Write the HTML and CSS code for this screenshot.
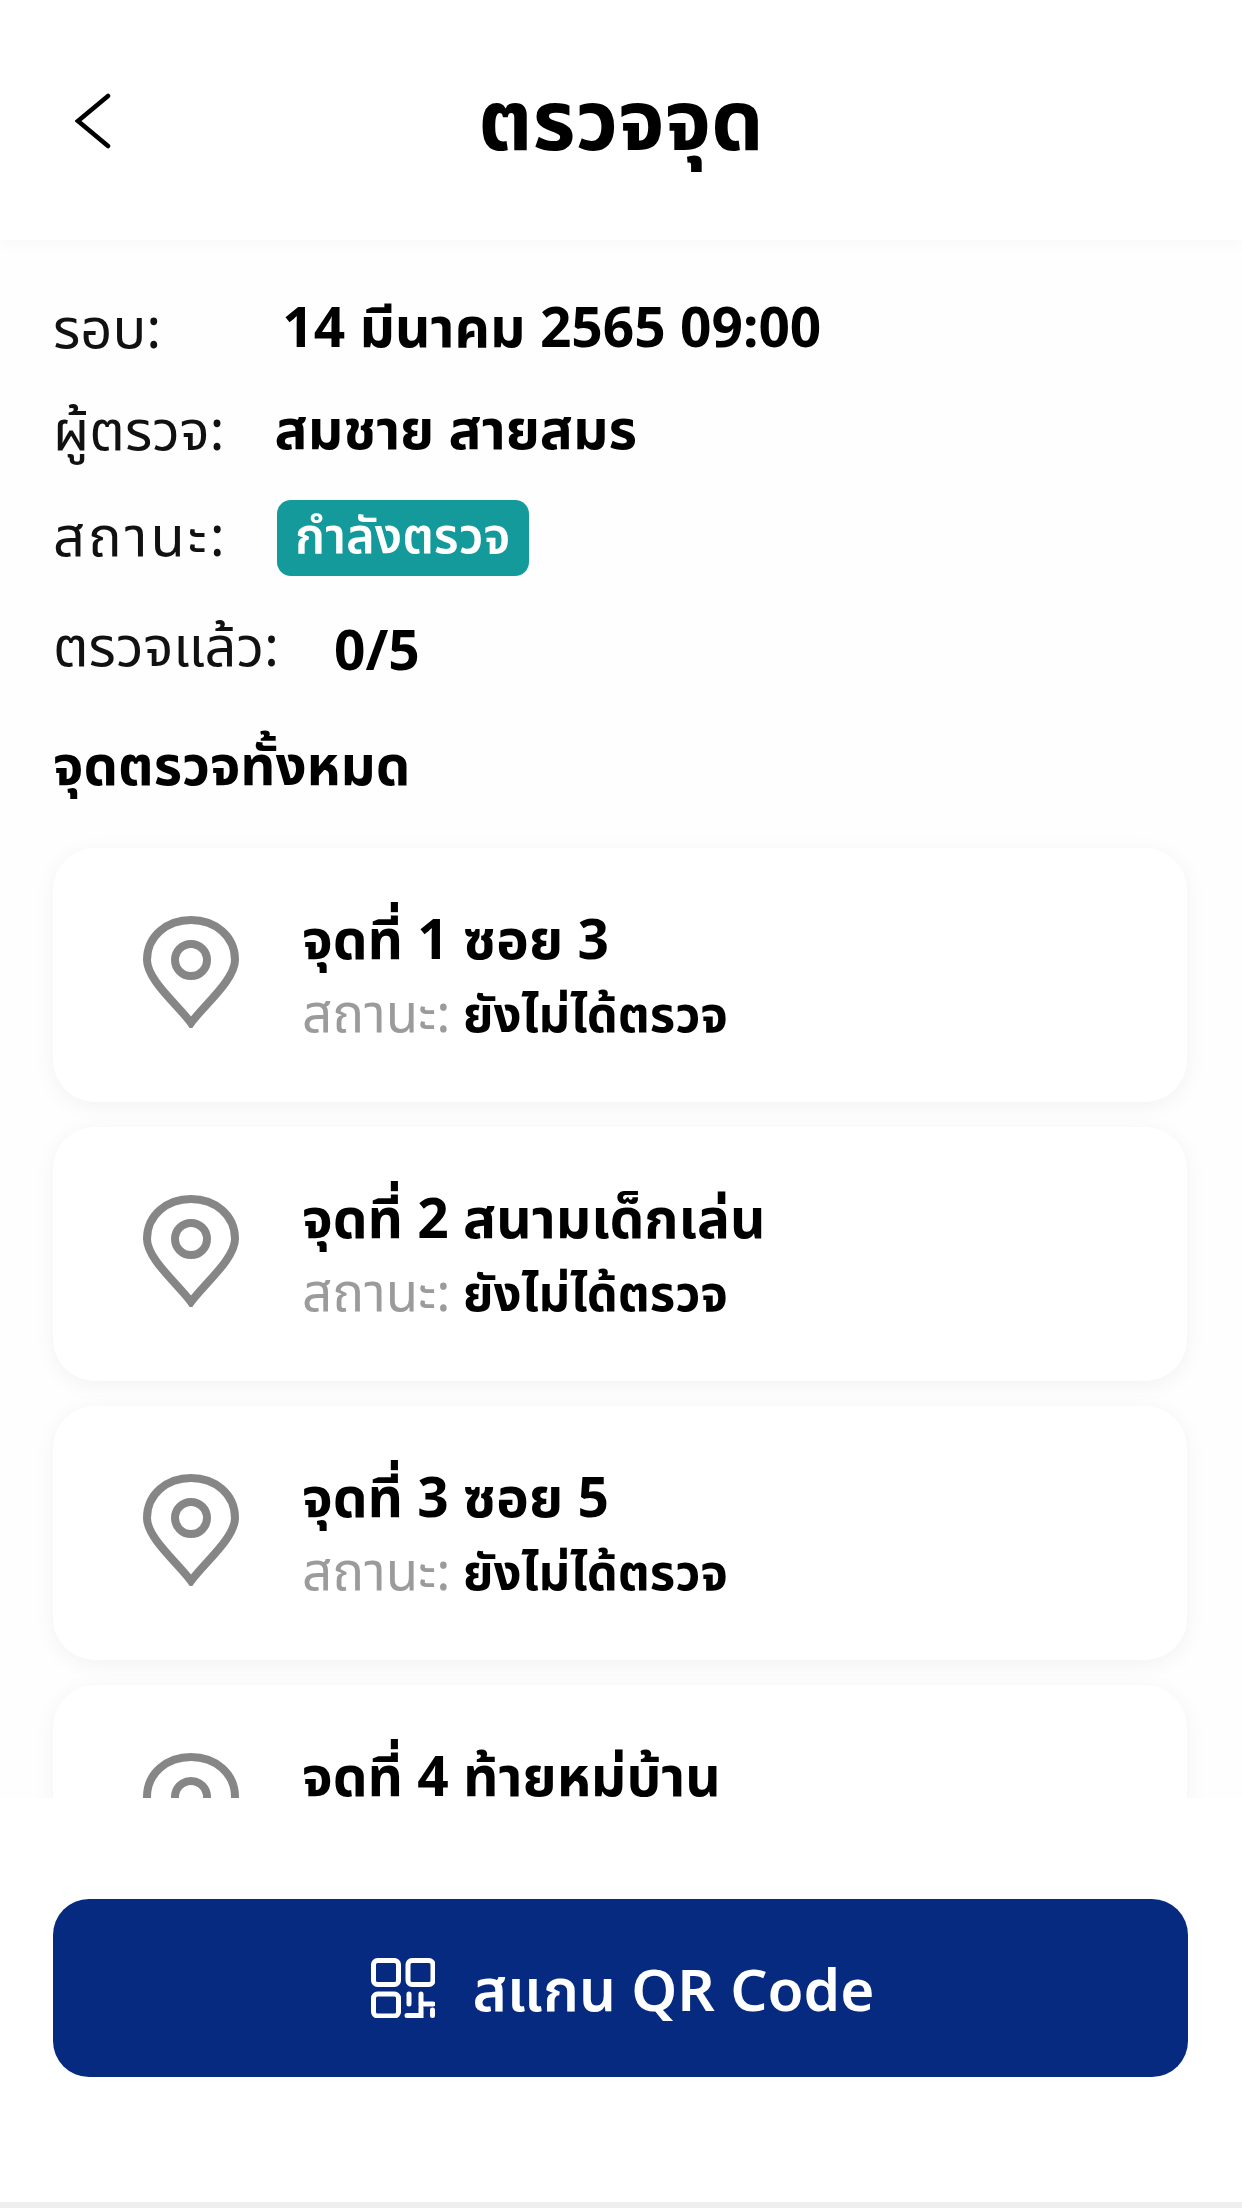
FILE: index.html
```html
<!DOCTYPE html>
<html lang="th">
<head>
<meta charset="utf-8">
<title>ตรวจจุด</title>
<link rel="stylesheet" href="styles.css">
</head>
<body>
<div class="screen">
  <header class="topbar">
    <svg class="back" viewBox="0 0 36 56" fill="none"><path d="M33 3 L3 28 L33 53"/></svg>
    <h1 class="title">ตรวจจุด</h1>
  </header>
  <main class="content">
    <section class="info">
      <div class="row row-low"><span class="label">รอบ:</span><span class="value v-round">14 มีนาคม 2565 09:00</span></div>
      <div class="row row-high"><span class="label">ผู้ตรวจ:</span><span class="value v-person">สมชาย สายสมร</span></div>
      <div class="row row-high"><span class="label label-wide">สถานะ:</span><span class="badge">กำลังตรวจ</span></div>
      <div class="row row-low"><span class="label">ตรวจแล้ว:</span><span class="value v-count">0/5</span></div>
    </section>
    <h2 class="heading">จุดตรวจทั้งหมด</h2>
    <section class="cards">
      <article class="card">
        <svg class="pin" viewBox="0 0 96 112" fill="none"><path d="M48 107 C36 90 4 64 4 44 C4 20 24 4 48 4 C72 4 92 20 92 44 C92 64 60 90 48 107 Z"/><circle cx="48" cy="44" r="16"/></svg>
        <div class="card-text"><div class="card-title">จุดที่ 1 ซอย 3</div><div class="card-status"><span class="muted">สถานะ:</span> ยังไม่ได้ตรวจ</div></div>
      </article>
      <article class="card">
        <svg class="pin" viewBox="0 0 96 112" fill="none"><path d="M48 107 C36 90 4 64 4 44 C4 20 24 4 48 4 C72 4 92 20 92 44 C92 64 60 90 48 107 Z"/><circle cx="48" cy="44" r="16"/></svg>
        <div class="card-text"><div class="card-title">จุดที่ 2 สนามเด็กเล่น</div><div class="card-status"><span class="muted">สถานะ:</span> ยังไม่ได้ตรวจ</div></div>
      </article>
      <article class="card">
        <svg class="pin" viewBox="0 0 96 112" fill="none"><path d="M48 107 C36 90 4 64 4 44 C4 20 24 4 48 4 C72 4 92 20 92 44 C92 64 60 90 48 107 Z"/><circle cx="48" cy="44" r="16"/></svg>
        <div class="card-text"><div class="card-title">จุดที่ 3 ซอย 5</div><div class="card-status"><span class="muted">สถานะ:</span> ยังไม่ได้ตรวจ</div></div>
      </article>
      <article class="card">
        <svg class="pin" viewBox="0 0 96 112" fill="none"><path d="M48 107 C36 90 4 64 4 44 C4 20 24 4 48 4 C72 4 92 20 92 44 C92 64 60 90 48 107 Z"/><circle cx="48" cy="44" r="16"/></svg>
        <div class="card-text"><div class="card-title">จุดที่ 4 ท้ายหมู่บ้าน</div><div class="card-status"><span class="muted">สถานะ:</span> ยังไม่ได้ตรวจ</div></div>
      </article>
    </section>
  </main>
  <footer class="footer">
    <button class="scan" type="button">
      <svg class="qr" viewBox="0 0 64 60" fill="none">
        <rect x="2.5" y="2.5" width="25" height="24" rx="4"/>
        <rect x="37" y="2.5" width="25" height="24" rx="4"/>
        <rect x="2.5" y="36" width="25" height="22" rx="4"/>
        <path d="M38 36 V46 M50 36 V46 H62 M36 57.5 H50 V50 M61.5 52 V57.5"/>
      </svg>
      <span class="scan-label">สแกน QR Code</span>
    </button>
  </footer>
</div>
</body>
</html>
```
FILE: styles.css
```css
* { box-sizing: border-box; }
html, body { margin: 0; padding: 0; }
body {
  background: #fefefe;
  color: #000;
  font-family: "Noto Sans", "Noto Sans Thai", "Open Sans", "DejaVu Sans", sans-serif;
}
.screen {
  width: 1242px;
  height: 2208px;
  display: flex;
  flex-direction: column;
  overflow: hidden;
  border-bottom: 6px solid #efefef;
}
.topbar {
  flex: 0 0 240px;
  position: relative;
  z-index: 2;
  background: #fff;
  display: flex;
  align-items: center;
  justify-content: center;
  padding-bottom: 6px;
  box-shadow: 0 6px 14px rgba(0, 0, 0, 0.025);
}
.back {
  position: absolute;
  left: 75px;
  top: 93px;
  width: 36px;
  height: 56px;
  stroke: #000;
  stroke-width: 4.5;
  stroke-linecap: round;
}
.title {
  margin: 0;
  font-size: 83px;
  font-weight: 700;
  line-height: 1;
}
.content {
  flex: 1 1 0;
  min-height: 0;
  overflow: hidden;
  padding: 34px 55px 0 53px;
  background: #fefefe;
}
.info { display: flex; flex-direction: column; }
.row {
  height: 106px;
  display: flex;
  align-items: center;
  font-size: 56px;
}
.row-low { padding-top: 6px; }
.row-high { padding-bottom: 2px; }
.label { font-weight: 400; color: #111; }
.label-wide { letter-spacing: 3px; }
.value { font-weight: 700; font-size: 55px; }
.v-round { margin-left: 121px; }
.v-person { margin-left: 50px; }
.v-count { margin-left: 55px; }
.badge {
  margin-left: 49px;
  height: 76px;
  width: 252px;
  display: flex;
  align-items: center;
  justify-content: center;
  background: #149a9b;
  border-radius: 14px;
  color: #fff;
  font-size: 49px;
  font-weight: 600;
}
.heading {
  margin: 34px 0 52px;
  font-size: 54.5px;
  font-weight: 700;
  line-height: 64px;
}
.cards { display: flex; flex-direction: column; gap: 25px; }
.card {
  flex: 0 0 254px;
  height: 254px;
  background: #fff;
  border-radius: 42px;
  display: flex;
  align-items: center;
  padding: 0 0 6px 90px;
  gap: 64px;
  box-shadow: 0 4px 22px rgba(0, 0, 0, 0.05);
}
.pin {
  flex: none;
  width: 96px;
  height: 112px;
  stroke: #868686;
  stroke-width: 8;
}
.card-text { display: flex; flex-direction: column; gap: 12px; margin-left: -1px; padding-top: 5px; }
.card-title { font-size: 55px; font-weight: 700; line-height: 64px; }
.card-status { font-size: 49px; font-weight: 700; line-height: 60px; }
.muted { color: #9b9b9b; font-weight: 400; font-size: 53px; }
.footer {
  flex: 0 0 404px;
  position: relative;
  z-index: 2;
  background: #fff;
  padding: 101px 54px 0 53px;
}
.scan {
  width: 100%;
  height: 178px;
  padding: 0 0 0 4px;
  border: 0;
  border-radius: 36px;
  background: #062a80;
  color: #fff;
  display: flex;
  align-items: center;
  justify-content: center;
  gap: 38px;
  font-family: inherit;
  font-size: 58.5px;
  font-weight: 600;
}
.scan-label { padding-top: 8px; }
.qr {
  flex: none;
  width: 64px;
  height: 60px;
  stroke: #fff;
  stroke-width: 5;
  stroke-linecap: round;
}
```
